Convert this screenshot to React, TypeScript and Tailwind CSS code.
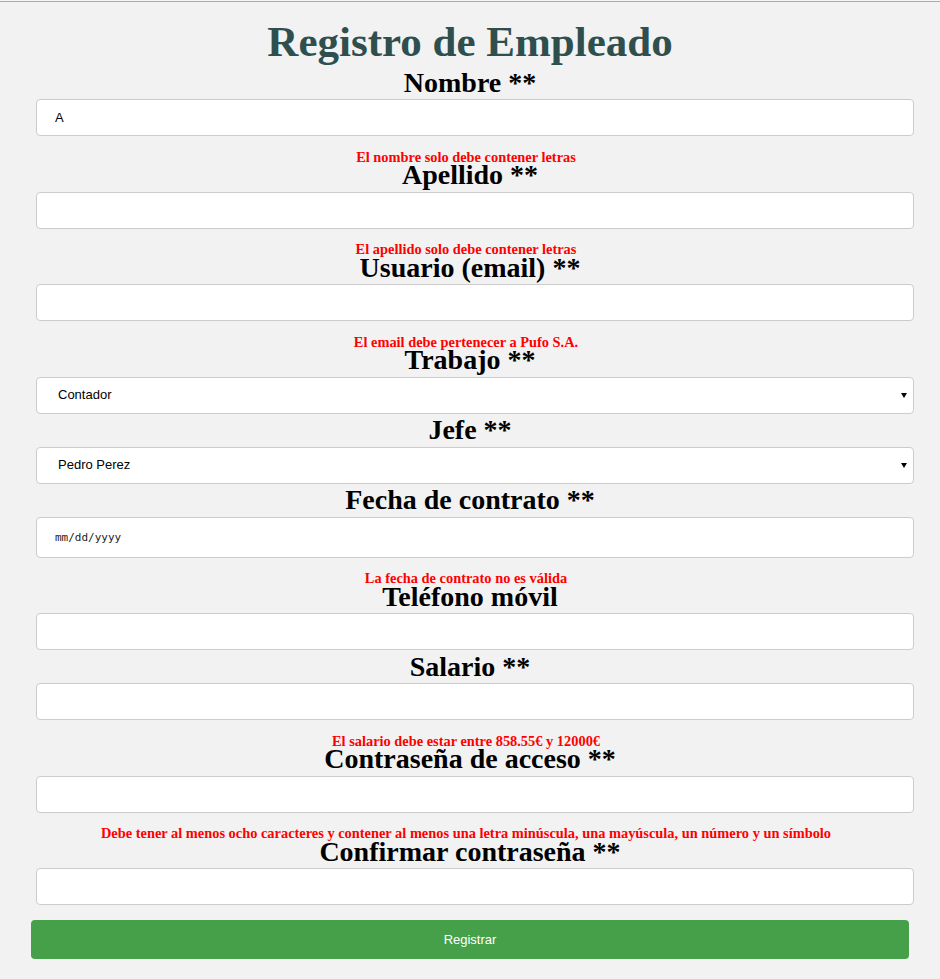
import React, { useState } from "react";

type Field = {
  label: string;
  kind: "text" | "select" | "date" | "password";
  value?: string;
  options?: string[];
  error?: string;
};

// campos del formulario de registro
const fields: Field[] = [
  {
    label: "Nombre **",
    kind: "text",
    value: "A",
    error: "El nombre solo debe contener letras",
  },
  {
    label: "Apellido **",
    kind: "text",
    error: "El apellido solo debe contener letras",
  },
  {
    label: "Usuario (email) **",
    kind: "text",
    error: "El email debe pertenecer a Pufo S.A.",
  },
  {
    label: "Trabajo **",
    kind: "select",
    options: ["Contador", "Gerente", "Vendedor"],
  },
  {
    label: "Jefe **",
    kind: "select",
    options: ["Pedro Perez", "Juan Lopez"],
  },
  {
    label: "Fecha de contrato **",
    kind: "date",
    error: "La fecha de contrato no es válida",
  },
  { label: "Teléfono móvil", kind: "text" },
  {
    label: "Salario **",
    kind: "text",
    error: "El salario debe estar entre 858.55€ y 12000€",
  },
  {
    label: "Contraseña de acceso **",
    kind: "password",
    error:
      "Debe tener al menos ocho caracteres y contener al menos una letra minúscula, una mayúscula, un número y un símbolo",
  },
  { label: "Confirmar contraseña **", kind: "password" },
];

const serif = "font-['Liberation_Serif','Times_New_Roman',serif]";
const sans = "font-['Liberation_Sans',Arial,sans-serif]";
const boxBase =
  "block w-[878px] ml-[5px] bg-white border border-[#ccc] rounded-[4px] outline-none text-black";

const FieldInput = ({ field }: { field: Field }) => {
  const [value, setValue] = useState(field.value ?? "");

  if (field.kind === "select") {
    return (
      <div className="relative w-[878px] ml-[5px]">
        <select
          defaultValue={field.options?.[0]}
          className={`${sans} block w-full h-[37px] appearance-none bg-white border border-[#ccc] rounded-[4px] pl-[21px] text-[13px] text-black outline-none`}
        >
          {field.options?.map((o) => (
            <option key={o}>{o}</option>
          ))}
        </select>
        {/* flecha del desplegable */}
        <svg
          className="absolute right-[7px] top-[16px] pointer-events-none"
          width="6"
          height="5"
          viewBox="0 0 6 5"
        >
          <polygon points="0,0 6,0 3,5" fill="#000" />
        </svg>
      </div>
    );
  }

  if (field.kind === "date") {
    return (
      <input
        type="text"
        placeholder="mm/dd/yyyy"
        className={`${boxBase} h-[41px] pl-[18px] font-['DejaVu_Sans_Mono',monospace] text-[11px] placeholder:text-[#222]`}
      />
    );
  }

  return (
    <input
      type={field.kind === "password" ? "password" : "text"}
      value={value}
      onChange={(e) => setValue(e.target.value)}
      className={`${boxBase} ${sans} h-[37px] pl-[18px] text-[13px]`}
    />
  );
};

export default function App() {
  return (
    <div className="min-h-[979px] bg-[#f2f2f2]">
      <div className="h-px bg-[#f6f6f6]" />
      <div className="border-t border-[#aaa] px-[31px] pt-[15px] pb-[20px]">
        <h1
          className={`${serif} text-center text-[43px] leading-[49px] font-bold text-[#2f4f4f]`}
        >
          Registro de Empleado
        </h1>
        <form onSubmit={(e) => e.preventDefault()}>
          {fields.map((field) => (
            <div key={field.label}>
              <h2
                className={`${serif} text-center text-[28px] leading-[26px] pt-[3.5px] pb-[3.5px] font-bold text-black whitespace-nowrap`}
              >
                {field.label}
              </h2>
              <FieldInput field={field} />
              {field.error ? (
                <div className="h-[22.5px] pt-[15.5px]">
                  <p
                    className={`${serif} pr-[8px] text-center text-[14.4px] leading-[10px] font-bold text-[#ff0000] whitespace-nowrap`}
                  >
                    {field.error}
                  </p>
                </div>
              ) : null}
            </div>
          ))}
          <button
            type="submit"
            className={`${sans} mt-[15px] block w-full h-[39px] rounded-[4px] bg-[#45a049] text-[13px] text-white`}
          >
            Registrar
          </button>
        </form>
      </div>
    </div>
  );
}
